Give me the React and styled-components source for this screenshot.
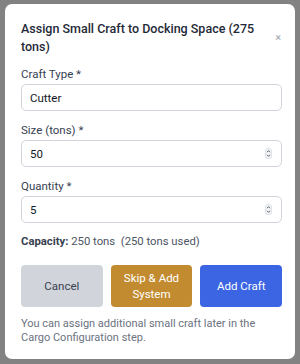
import React from "react";
import styled, { createGlobalStyle } from "styled-components";

const Global = createGlobalStyle`
  html, body { margin: 0; padding: 0; }
  body {
    background: #828282;
    font-family: Roboto, "Noto Sans", sans-serif;
    width: 300px;
    height: 364px;
    overflow: hidden;
  }
`;

const Backdrop = styled.div`
  width: 300px;
  height: 364px;
  display: flex;
  align-items: flex-start;
  padding: 4px 5px 0 5px;
  box-sizing: border-box;
`;

const Modal = styled.div`
  width: 290px;
  height: 355px;
  box-sizing: border-box;
  background: #fff;
  border-radius: 7px;
  padding: 16px 13px 16px 16px;
  display: flex;
  flex-direction: column;
`;

const Header = styled.div`
  display: flex;
  align-items: center;
  gap: 10px;
  margin-bottom: 10px;
`;

const Title = styled.h2`
  flex: 1;
  margin: 0;
  font-size: 12.5px;
  line-height: 18px;
  font-weight: 500;
  color: #1f2937;
`;

const Close = styled.button`
  border: none;
  background: none;
  padding: 0 1px 0 0;
  font-size: 11px;
  line-height: 12px;
  color: #9ca3af;
  font-family: inherit;
`;

const Field = styled.div`
  margin-bottom: 11px;
`;

const Label = styled.label`
  display: block;
  font-size: 11.5px;
  line-height: 16px;
  color: #374151;
  margin-bottom: 2px;
`;

const InputBox = styled.div`
  height: 27px;
  box-sizing: border-box;
  border: 1px solid #d1d5db;
  border-radius: 5px;
  display: flex;
  align-items: center;
  padding: 0 9px 0 8px;
  font-size: 11.5px;
  color: #111827;
`;

const Value = styled.span`
  flex: 1;
`;

const Spinner = () => (
  <svg width="7" height="11" viewBox="0 0 7 11">
    <rect x="0.5" y="0.5" width="6" height="10" rx="2" fill="#f3f4f6" stroke="#d1d5db" strokeWidth="0.6" />
    <path d="M2 4.2 L3.5 2.6 L5 4.2" fill="none" stroke="#4b5563" strokeWidth="0.9" />
    <path d="M2 6.8 L3.5 8.4 L5 6.8" fill="none" stroke="#4b5563" strokeWidth="0.9" />
  </svg>
);

const Capacity = styled.div`
  font-size: 11.3px;
  line-height: 16px;
  color: #4b5563;
  white-space: pre;
  & b { font-weight: 700; color: #374151; }
`;

const Buttons = styled.div`
  display: grid;
  grid-template-columns: repeat(3, 1fr);
  gap: 8px;
  margin-top: 15px;
`;

const Button = styled.button`
  height: 42px;
  border: none;
  border-radius: 4px;
  font-family: inherit;
  font-size: 11.5px;
  line-height: 16px;
  padding: 0 6px;
  background: ${(p) => (p.$variant === "gold" ? "#c28b30" : p.$variant === "blue" ? "#3b65e3" : "#d1d5db")};
  color: ${(p) => (p.$variant ? "#ffffff" : "#374151")};
`;

const Note = styled.p`
  margin: 10px 0 0 0;
  font-size: 11px;
  line-height: 14px;
  color: #6b7280;
`;

export default function App() {
  return (
    <>
      <Global />
      <Backdrop>
        <Modal>
          <Header>
            <Title>Assign Small Craft to Docking Space (275 tons)</Title>
            <Close>×</Close>
          </Header>
          <Field>
            <Label>Craft Type *</Label>
            <InputBox><Value>Cutter</Value></InputBox>
          </Field>
          <Field>
            <Label>Size (tons) *</Label>
            <InputBox><Value>50</Value><Spinner /></InputBox>
          </Field>
          <Field>
            <Label>Quantity *</Label>
            <InputBox><Value>5</Value><Spinner /></InputBox>
          </Field>
          <Capacity><b>Capacity:</b> 250 tons  (250 tons used)</Capacity>
          <Buttons>
            <Button>Cancel</Button>
            <Button $variant="gold">Skip &amp; Add System</Button>
            <Button $variant="blue">Add Craft</Button>
          </Buttons>
          <Note>You can assign additional small craft later in the Cargo Configuration step.</Note>
        </Modal>
      </Backdrop>
    </>
  );
}
